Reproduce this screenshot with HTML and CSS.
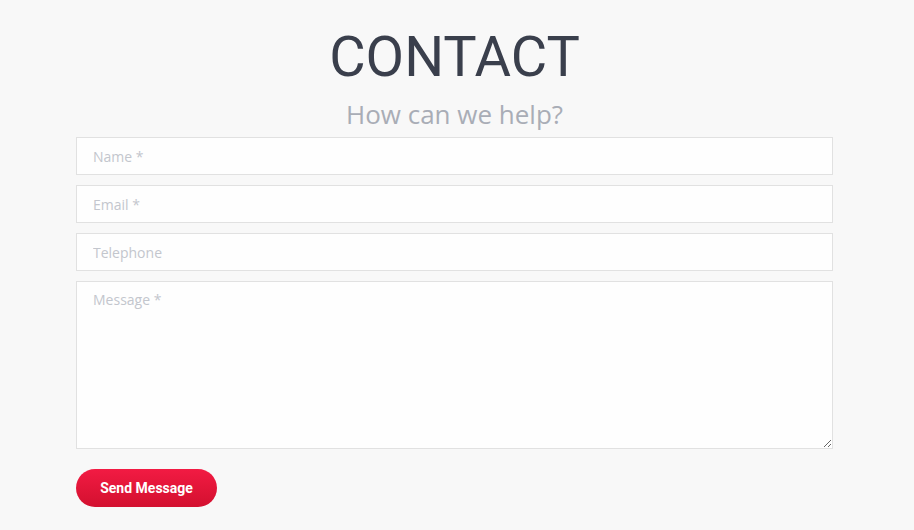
FILE: index.html
```html
<!DOCTYPE html>
<html>
<head>
<meta charset="utf-8">
<link rel="stylesheet" href="styles.css">
</head>
<body>
<section class="contact">
  <h1 class="title">CONTACT</h1>
  <p class="subtitle">How can we help?</p>
  <form class="form">
    <input class="field" type="text" placeholder="Name *">
    <input class="field" type="email" placeholder="Email *">
    <input class="field" type="text" placeholder="Telephone">
    <textarea class="field area" placeholder="Message *"></textarea>
    <div class="actions"><button class="send" type="button">Send Message</button></div>
  </form>
</section>
</body>
</html>
```
FILE: styles.css
```css
html, body { margin: 0; padding: 0; }
body { background: #f8f8f8; font-family: "Open Sans", sans-serif; }
.contact { width: 757px; margin-left: 76px; padding-top: 22px; }
.title { margin: 0; text-align: center; font-family: Roboto, sans-serif; font-weight: 400; font-size: 56px; line-height: 70px; color: #3a3f4c; }
.subtitle { margin: 0; text-align: center; font-family: "Open Sans", sans-serif; font-size: 26px; line-height: 44px; color: #a9adb6; }
.form { display: flex; flex-direction: column; gap: 10px; margin-top: 1px; }
.field { box-sizing: border-box; width: 100%; height: 38px; border: 1px solid #e1e1e1; background: #fefefe; padding: 0 16px; font-family: "Open Sans", sans-serif; font-size: 14px; color: #555; outline: none; margin: 0; }
.field::placeholder { color: #c3c6cd; }
.area { height: 168px; padding-top: 8px; resize: vertical; display: block; }
.actions { padding-top: 10px; }
.send { width: 141px; height: 38px; border: none; border-radius: 19px; background: linear-gradient(#f21b43, #d3102f); color: #fff; font-family: Roboto, sans-serif; font-weight: 700; font-size: 14px; cursor: pointer; }
```
